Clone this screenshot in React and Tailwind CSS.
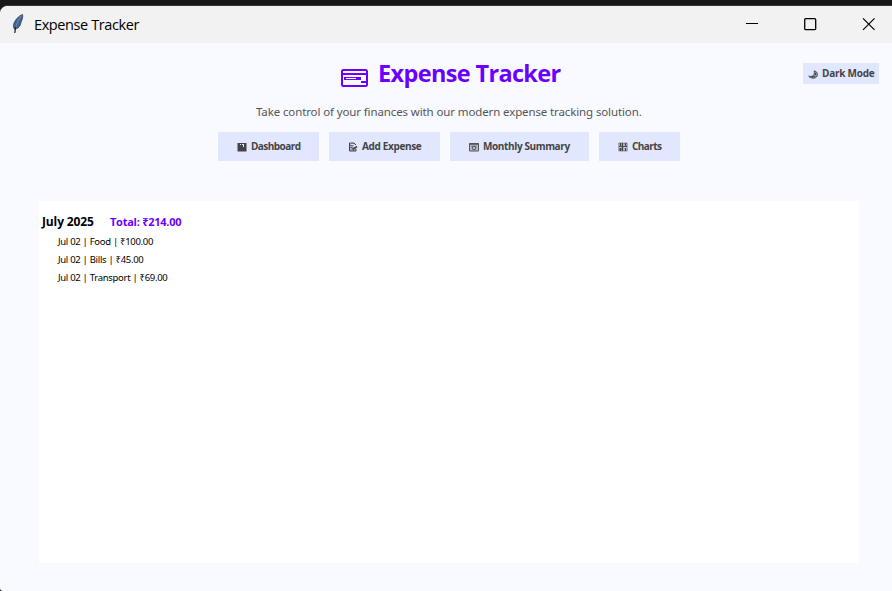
import React from 'react';

function Feather() {
  return (
    <svg className="h-[20px] w-[12px]" viewBox="0 0 12 20">
      <path d="M10.6 .4C6.5 2 2.6 6.2 1.6 10.6c-.4 2 .1 3.600 1 4.700l1.300-.5c3-.6 4.600-3.300 5.100-6.300.8-2.700 2.200-4.500 1.600-8.100z" fill="#3d6794" stroke="#3b3f46" strokeWidth=".8" />
      <path d="M9.800 1.600C6.500 5 4 10 2.900 18.800" fill="none" stroke="#a9b4c4" strokeWidth=".5" />
      <path d="M3.600 13l-.8 6" stroke="#222" strokeWidth="1.200" />
    </svg>
  );
}

function CardIcon() {
  return (
    <svg className="h-[18px] w-[27px]" viewBox="0 0 27 18">
      <rect x="1" y="1" width="25" height="16" rx="1.500" fill="none" stroke="#6a00ff" strokeWidth="2" />
      <path d="M1 4h25v2H1zM3 8h17v3H3zM20 12h5v2h-5z" fill="#6a00ff" />
      <path d="M5 9.500h10" stroke="#f8faff" />
    </svg>
  );
}

function DashboardIcon() {
  return (
    <svg className="h-[10px] w-[10px]" viewBox="0 0 10 10">
      <path d="M.5 1h9v8.500h-9z" fill="#444" />
      <path d="M3 2h1v1H3zM5 2h2v3H6V3H5z" fill="#e0e7ff" />
    </svg>
  );
}

function MemoIcon() {
  return (
    <svg className="h-[10px] w-[10px]" viewBox="0 0 10 10" fill="none" stroke="#444">
      <path d="M1.500 1H6l2 2M1.500 1v8H8V7" fill="#aaa9bd" />
      <path d="M2.500 3.500h3M2.500 5.500h2" strokeWidth=".7" />
      <path d="M4.500 7.500L9 4.500" strokeWidth="1.700" />
    </svg>
  );
}

function CalendarIcon() {
  return (
    <svg className="h-[10px] w-[10px]" viewBox="0 0 10 10" fill="none" stroke="#555">
      <path d="M.5 1.500h9v7.500h-9z" fill="#b9bdd0" />
      <path d="M.5 2h9" strokeWidth="1.400" />
      <circle cx="5" cy="6" r="1.800" />
      <path d="M2 4.200h6" strokeWidth=".6" />
    </svg>
  );
}

function ChartIcon() {
  return (
    <svg className="h-[10px] w-[10px]" viewBox="0 0 10 10" fill="none" stroke="#444">
      <path d="M.8 1h8.400v8H.8z" fill="#c3c8dc" strokeWidth=".5" />
      <path d="M2.500 1v3M2.500 6v3M4.500 1v8M7.500 1v3M7.500 6v3" strokeWidth="1.300" />
      <path d="M1 4.500h8M1 7h3" strokeWidth=".9" />
    </svg>
  );
}

function MoonIcon() {
  return (
    <svg className="mt-[2px] h-[10px] w-[10px]" viewBox="0 0 10 10">
      <path d="M6 .8c3.200.6 4.200 3.200 3 5.600C7.600 8.600 3 9 .7 6.200c2 .5 3.500.2 4.500-.8 1.200-1.300 1.500-3 .8-4.600z" fill="#8b8d9c" stroke="#444" strokeWidth=".8" />
      <path d="M3 6.800h4M7.500 3v2" stroke="#444" />
    </svg>
  );
}

const tabs = [
  { label: 'Dashboard', icon: DashboardIcon, width: 'w-[101px]', tracking: 'tracking-[-0.55px]' },
  { label: 'Add Expense', icon: MemoIcon, width: 'w-[111px]', tracking: 'tracking-[-0.35px]' },
  { label: 'Monthly Summary', icon: CalendarIcon, width: 'w-[139px]', tracking: 'tracking-[-0.38px]' },
  { label: 'Charts', icon: ChartIcon, width: 'w-[81px]', tracking: 'tracking-[-0.55px]' },
];

const expenses = [
  ['Jul 02', 'Food', '₹100.00'],
  ['Jul 02', 'Bills', '₹45.00'],
  ['Jul 02', 'Transport', '₹69.00'],
];

export default function App() {
  return (
    <div className="h-[591px] w-[892px] overflow-hidden bg-[#181818] pt-[5px] font-['Open_Sans','Noto_Sans',sans-serif]">
      <div className="flex h-[586px] flex-col overflow-hidden rounded-tl-[8px] rounded-bl-[3px] border-t border-[#3a3538] bg-[#f8faff]">
        <header className="flex h-[37px] shrink-0 items-center justify-between bg-[#f2f2f2] pr-[17px] pb-[2px] pl-[12px]">
          <div className="flex items-center gap-[10px]">
            <Feather />
            <h1 className="pt-[2px] text-[14.500px] leading-5 tracking-[-0.4px] whitespace-nowrap text-black">Expense Tracker</h1>
          </div>
          <div className="flex items-center gap-[45px]">
            <svg className="h-[14px] w-[13px]" viewBox="0 0 13 14"><path d="M0 6.500h12" stroke="#000" /></svg>
            <svg className="h-[14px] w-[13px]" viewBox="0 0 13 14"><rect x=".7" y="1.700" width="11" height="11" rx="1" fill="none" stroke="#000" strokeWidth="1.300" /></svg>
            <svg className="h-[14px] w-[13px]" viewBox="0 0 13 14"><path d="M1 1.300l11.500 11.500M12.500 1.300L1 12.800" stroke="#000" strokeWidth="1.200" /></svg>
          </div>
        </header>

        <div className="grid h-[52px] shrink-0 grid-cols-[341px_1fr_120px] pt-[14px]">
          <div />
          <div className="flex h-[34px] items-center gap-[10px]">
            <div className="shrink-0 pt-[7px]"><CardIcon /></div>
            <h2 className="pb-[2px] text-[23.500px] leading-[32px] font-bold tracking-[-0.65px] whitespace-nowrap text-[#6a00ff]">Expense Tracker</h2>
          </div>
          <div className="flex justify-end pt-[6px] pr-[13px]">
            <button className="flex h-[21px] w-[76px] items-center gap-[4px] bg-[#e0e7ff] pl-[5px] text-[10px] font-bold tracking-[-0.25px] whitespace-nowrap text-[#444]">
              <MoonIcon />
              Dark Mode
            </button>
          </div>
        </div>

        <p className="ml-[256px] h-[37px] pt-[5px] font-['Noto_Sans',sans-serif] text-[11.500px] leading-[24px] tracking-[-0.120px] whitespace-nowrap text-[#555]">
          Take control of your finances with our modern expense tracking solution.
        </p>

        <nav className="ml-[218px] flex h-[29px] shrink-0 gap-[10px]">
          {tabs.map(({ label, icon: Icon, width, tracking }) => (
            <button key={label} className={`${width} flex h-[29px] items-center gap-[4px] bg-[#e0e7ff] pl-[19px]`}>
              <Icon />
              <span className={`${tracking} text-[10px] font-bold whitespace-nowrap text-[#444]`}>{label}</span>
            </button>
          ))}
        </nav>

        <main className="mt-[40px] ml-[39px] h-[362px] w-[820px] shrink-0 bg-white pt-[11px] pl-[3px]">
          <div className="flex h-[20px] items-center whitespace-nowrap">
            <h3 className="w-[68px] text-[12px] font-bold tracking-[-0.120px] text-black">July 2025</h3>
            <span className="text-[11px] font-bold tracking-[-0.25px] text-[#6a00ff]">Total: ₹214.00</span>
          </div>
          <ul className="pt-px pl-[16px] font-['Noto_Sans',sans-serif]">
            {expenses.map((row) => (
              <li key={row[1]} className="h-[18px] text-[9.500px] leading-[18px] tracking-[-0.300px] whitespace-nowrap text-black">
                {row.join(' | ')}
              </li>
            ))}
          </ul>
        </main>
      </div>
    </div>
  );
}
